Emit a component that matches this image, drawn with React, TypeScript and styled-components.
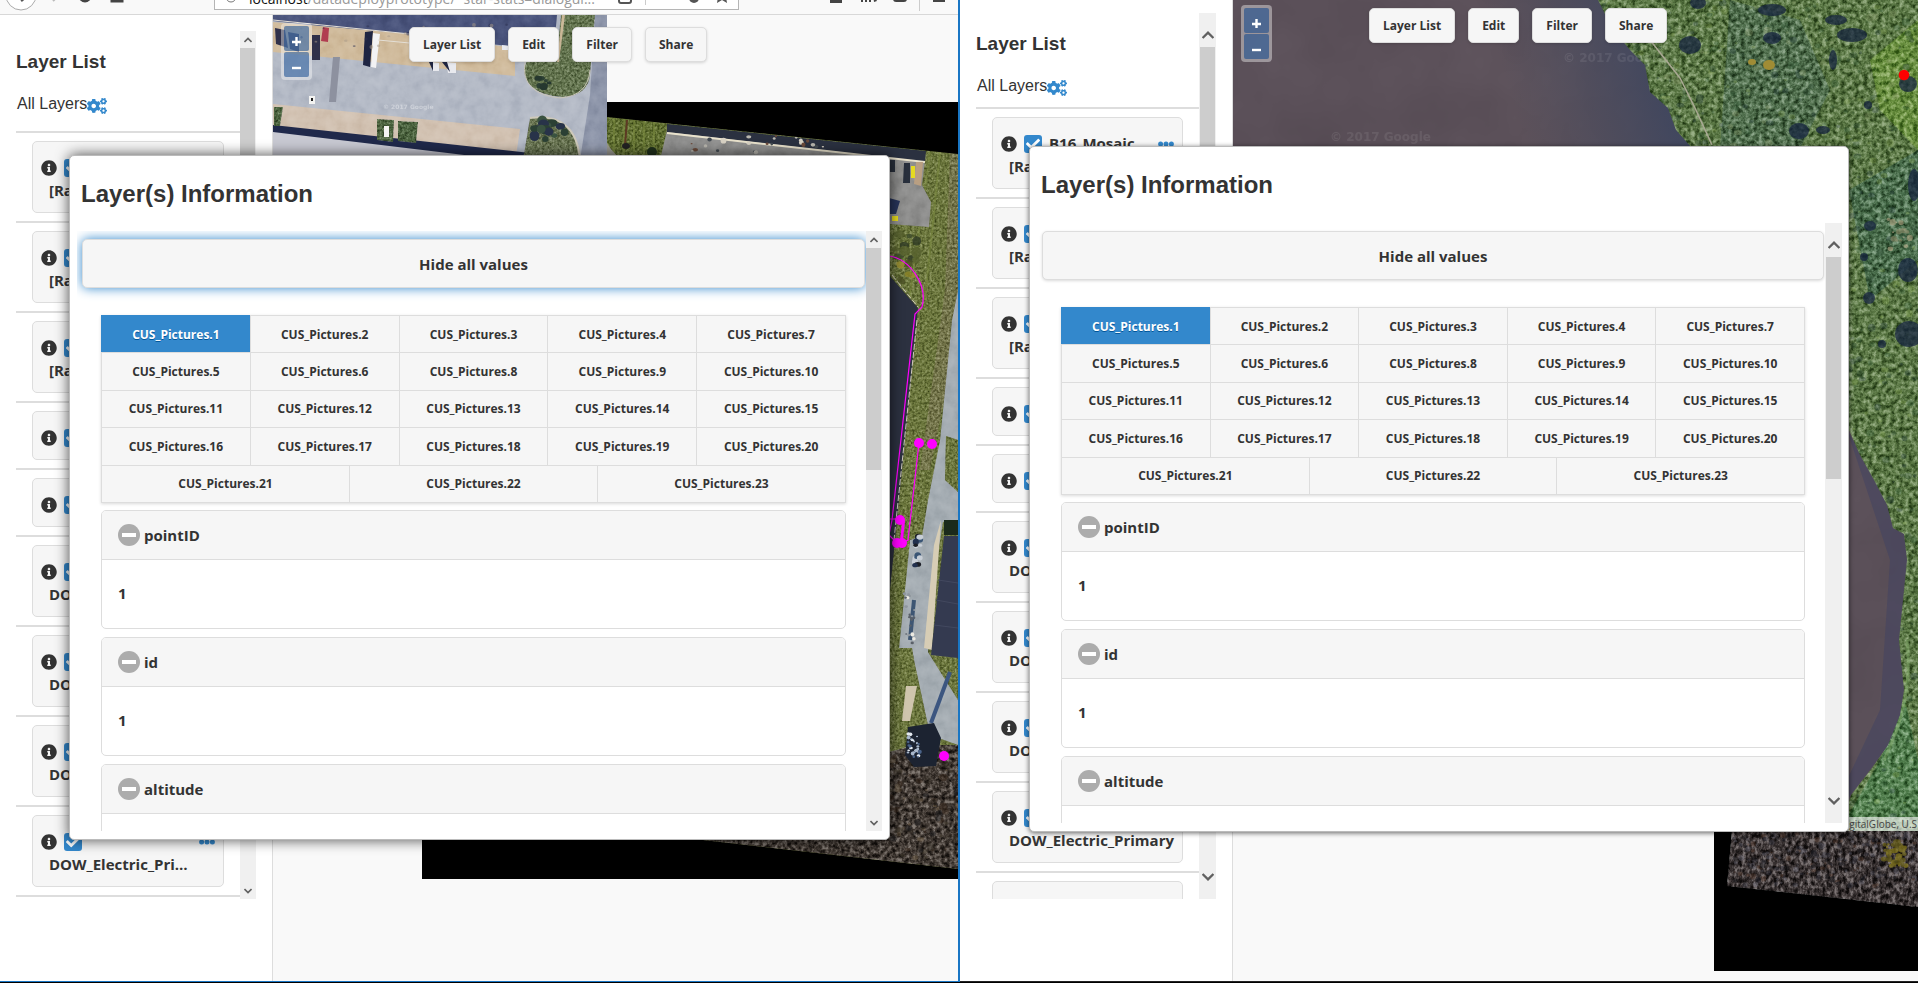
import React from "react";
import styled, { createGlobalStyle, css } from "styled-components";
import { FaCheck, FaCogs, FaInfoCircle } from "react-icons/fa";

const ui = `"Open Sans", "Noto Sans", sans-serif`;
const arial = `"Liberation Sans", Arial, sans-serif`;

const Global = createGlobalStyle`
  * { box-sizing: border-box; }
  body { margin: 0; background: #000; color: #333; font-family: ${ui}; }
  h1, h2, h3, p, ul { margin: 0; padding: 0; }
  button { font-family: inherit; color: inherit; cursor: pointer; margin: 0; }
`;

/* ---------- page and windows ---------- */

const Desktop = styled.div`
  display: grid;
  grid-template-columns: calc(50% + 1px) minmax(0, 1fr);
  height: 100vh;
  padding-bottom: 1px;
  overflow: hidden;
`;

const Window = styled.section<{ $active?: boolean }>`
  display: flex;
  flex-direction: column;
  min-width: 0;
  min-height: 0;
  background: #fff;
  border-bottom: 1px solid #222;
  ${(p) =>
    p.$active &&
    css`
      border-right: 2px solid #1976c4;
      border-bottom-color: #1976c4;
    `}
`;

const Workspace = styled.div`
  position: relative;
  display: flex;
  flex: 1;
  min-height: 0;
`;

/* ---------- browser toolbar ---------- */

const Chrome = styled.header`
  display: flex;
  align-items: flex-end;
  height: 15px;
  flex: none;
  padding-left: 6px;
  overflow: hidden;
  background: #f9f9f9;
  border-bottom: 1px solid #d8d8d8;
`;

const NavIcons = styled.svg`
  flex: none;
  width: 208px;
  height: 14px;
`;

const Address = styled.div`
  display: flex;
  align-items: center;
  width: 525px;
  height: 24px;
  flex: none;
  margin-bottom: 4px;
  padding-left: 10px;
  border: 1px solid #b5b5b5;
  background: #fff;
  font-size: 14px;
  color: #999;
  white-space: nowrap;

  b {
    font-weight: 400;
    color: #111;
  }
  svg {
    flex: none;
  }
`;

const Url = styled.span`
  flex: 1;
  padding-left: 10px;
`;

/* ---------- scroll areas ---------- */

const ScrollArea = styled.div`
  display: flex;
  min-height: 0;
  flex: 1;
  overflow: hidden;
`;

const ScrollContent = styled.div`
  flex: 1;
  min-width: 0;
  overflow: hidden;
`;

const Track = styled.div<{ $wide?: boolean }>`
  display: flex;
  flex-direction: column;
  flex: none;
  width: ${(p) => (p.$wide ? 17 : 16)}px;
  padding: 0 1px 0 ${(p) => (p.$wide ? 1 : 0)}px;
  background: #f0f0f0;
`;

const Arrow = styled.span<{ $wide?: boolean }>`
  display: grid;
  place-items: center;
  height: ${(p) => (p.$wide ? 34 : 17)}px;
  padding-top: ${(p) => (p.$wide ? 10 : 0)}px;
  &:last-child {
    margin-top: auto;
    padding: 0 0 ${(p) => (p.$wide ? 10 : 0)}px;
  }
`;

const Thumb = styled.span<{ $share: number }>`
  height: ${(p) => p.$share}%;
  background: #cdcdcd;
`;

function Scrollbar({ wide, share }: { wide?: boolean; share: number }) {
  const w = wide ? 12 : 8;
  const stroke = { fill: "none", stroke: "#606060", strokeWidth: wide ? 1.9 : 2.2 };
  return (
    <Track $wide={wide} aria-hidden="true">
      <Arrow $wide={wide}>
        <svg width={w} height={w} viewBox="0 0 10 10">
          <path d="M0.5 7.5 5 3l4.500 4.500" {...stroke} />
        </svg>
      </Arrow>
      <Thumb $share={share} />
      <Arrow $wide={wide}>
        <svg width={w} height={w} viewBox="0 0 10 10">
          <path d="M0.5 2.500 5 7l4.500-4.500" {...stroke} />
        </svg>
      </Arrow>
    </Track>
  );
}

/* ---------- layer sidebar ---------- */

const Sidebar = styled.aside<{ $top: number }>`
  display: flex;
  flex: none;
  width: 273px;
  padding: ${(p) => p.$top}px 16px 82px;
  border-right: 1px solid #ddd;
  background: #fff;
`;

const SideTitle = styled.h2`
  padding-top: 19px;
  font: bold 19px/24px ${arial};
`;

const AllLayers = styled.div<{ $gap: number }>`
  display: flex;
  align-items: flex-end;
  height: 22px;
  margin: 20px 0 ${(p) => p.$gap}px;
  padding-left: 1px;
  font: 16px/20px ${arial};
  span {
    align-self: flex-start;
  }
`;

const IconButton = styled.button`
  display: flex;
  padding: 0;
  border: 0;
  background: none;
  color: #38c;
`;

const LayerList = styled.ul`
  list-style: none;
`;

const LayerItem = styled.li`
  padding: 8px 16px;
  border-top: 2px solid #ddd;
`;

const LayerCard = styled.div`
  padding: 17px 8px 12px;
  border: 1px solid #ddd;
  border-radius: 5px;
  background: #f6f6f6;
  font-size: 15px;
  font-weight: 700;
`;

const LayerRow = styled.div`
  display: flex;
  align-items: center;
  gap: 7px;
  height: 18px;
`;

const Tick = styled.label`
  position: relative;
  display: flex;
  width: 18px;
  height: 18px;

  input {
    appearance: none;
    width: 18px;
    height: 18px;
    margin: 0;
    border-radius: 3px;
    background: #38c;
  }
  svg {
    position: absolute;
    top: 2px;
    left: 2px;
    color: #fff;
    pointer-events: none;
  }
`;

const LayerName = styled.span`
  flex: 1;
  padding-bottom: 2px;
  line-height: 18px;
  white-space: nowrap;
`;

const LayerNote = styled.p<{ $clip?: boolean }>`
  margin: 3px 0 0 8px;
  line-height: 20px;
  white-space: nowrap;
  ${(p) =>
    p.$clip &&
    css`
      margin-right: 18px;
      overflow: hidden;
      text-overflow: ellipsis;
    `}
`;

const layers: { name?: string; note?: string }[] = [
  { name: "B16_Mosaic", note: "[Raster]" },
  { note: "[Raster]" },
  { note: "[Raster]" },
  {},
  {},
  { note: "DOW" },
  { note: "DOW" },
  { note: "DOW" },
  { note: "DOW_Electric_Primary" },
  {},
];

function Layers({ top, gap, wide, clip }: { top: number; gap: number; wide?: boolean; clip?: boolean }) {
  return (
    <Sidebar $top={top}>
      <ScrollArea>
        <ScrollContent>
          <SideTitle>Layer List</SideTitle>
          <AllLayers $gap={gap}>
            <span>All Layers</span>
            <IconButton aria-label="Layer settings">
              <FaCogs size={20} />
            </IconButton>
          </AllLayers>
          <LayerList>
            {layers.map((layer, i) => (
              <LayerItem key={i}>
                <LayerCard>
                  <LayerRow>
                    <FaInfoCircle size={16} />
                    <Tick>
                      <input type="checkbox" defaultChecked aria-label={`Show layer ${i + 1}`} />
                      <FaCheck size={14} />
                    </Tick>
                    <LayerName>{layer.name}</LayerName>
                    <IconButton aria-label="More">
                      <svg width="16" height="6" fill="currentColor">
                        <circle cx="2.600" cy="3" r="2.500" />
                        <circle cx="8" cy="3" r="2.500" />
                        <circle cx="13.400" cy="3" r="2.500" />
                      </svg>
                    </IconButton>
                  </LayerRow>
                  {layer.note && <LayerNote $clip={clip}>{layer.note}</LayerNote>}
                </LayerCard>
              </LayerItem>
            ))}
          </LayerList>
        </ScrollContent>
        <Scrollbar wide={wide} share={60} />
      </ScrollArea>
    </Sidebar>
  );
}

/* ---------- map controls ---------- */

const MapPane = styled.main`
  position: relative;
  flex: 1;
  min-width: 0;
  overflow: hidden;
  background: #f9f9f9;
`;

const Imagery = styled.svg`
  position: absolute;
  inset: 0;
  width: 100%;
  height: 100%;
`;

const ZoomBox = styled.div<{ $top: number }>`
  position: absolute;
  top: ${(p) => p.$top}px;
  left: 8px;
  display: grid;
  gap: 1px;
  padding: 3px;
  border-radius: 4px;
  background: rgba(255, 255, 255, 0.4);
`;

const ZoomButton = styled.button`
  display: grid;
  place-items: center;
  width: 25px;
  height: 25px;
  padding: 5px 0 0;
  border: 0;
  border-radius: 2px;
  background: rgba(0, 60, 136, 0.5);
`;

const MapMenu = styled.nav<{ $top: number }>`
  position: absolute;
  top: ${(p) => p.$top}px;
  left: 136px;
  display: flex;
  gap: 13px;
`;

const MenuButton = styled.button`
  height: 35px;
  padding: 0 13px;
  border: 1px solid #ddd;
  border-radius: 5px;
  background: #f6f6f6;
  box-shadow: 0 1px 3px rgba(0, 0, 0, 0.15);
  font-size: 12px;
  font-weight: 700;
`;

function Controls({ top, zoomTop }: { top: number; zoomTop: number }) {
  return (
    <>
      <ZoomBox $top={zoomTop}>
        <ZoomButton aria-label="Zoom in">
          <svg width="9" height="9" stroke="#fff" strokeWidth="2.400">
            <path d="M0 5H9M4.500 0V9" />
          </svg>
        </ZoomButton>
        <ZoomButton aria-label="Zoom out">
          <svg width="9" height="9" stroke="#fff" strokeWidth="2.400">
            <path d="M0 5H9" />
          </svg>
        </ZoomButton>
      </ZoomBox>
      <MapMenu $top={top}>
        {["Layer List", "Edit", "Filter", "Share"].map((t) => (
          <MenuButton key={t}>{t}</MenuButton>
        ))}
      </MapMenu>
    </>
  );
}

/* ---------- information dialog ---------- */

const Dialog = styled.section<{ $top: number; $bottom: number; $deep?: boolean }>`
  position: absolute;
  top: ${(p) => p.$top}px;
  bottom: ${(p) => p.$bottom}px;
  left: 69px;
  right: ${(p) => (p.$deep ? 68 : 69)}px;
  display: flex;
  flex-direction: column;
  padding: 0 ${(p) => (p.$deep ? 7 : 6)}px 8px 7px;
  border: 1px solid #bbb;
  border-radius: 5px;
  background: #fff;
  box-shadow: ${(p) => (p.$deep ? "0 0 14px rgba(0, 0, 0, 0.7)" : "0 1px 5px rgba(0, 0, 0, 0.6)")};
`;

const DialogTitle = styled.h1<{ $height: number }>`
  flex: none;
  height: ${(p) => p.$height}px;
  padding: 24px 0 0 4px;
  font: bold 24px/28px ${arial};
`;

const ToggleAll = styled.button<{ $focused?: boolean }>`
  display: block;
  width: calc(100% - 6px);
  height: 49px;
  margin: 8px 1px 27px 5px;
  border: 1px solid #ddd;
  border-radius: 5px;
  background: #f6f6f6;
  box-shadow: ${(p) => (p.$focused ? "0 0 12px #38c" : "0 1px 3px rgba(0, 0, 0, 0.15)")};
  font-size: 15px;
  font-weight: 700;
`;

const Body = styled.div`
  margin: 0 20px 0 24px;
`;

const Tabs = styled.div`
  display: grid;
  grid-template-rows: repeat(5, 1fr);
  height: 188px;
  margin-bottom: 7px;
  border: solid #ddd;
  border-width: 0 1px 1px 0;
  box-shadow: 0 1px 3px rgba(0, 0, 0, 0.15);
`;

const TabRow = styled.div`
  display: flex;
`;

const Tab = styled.button<{ $on?: boolean }>`
  flex: 1 1 0;
  padding: 0;
  border: solid #ddd;
  border-width: 1px 0 0 1px;
  background: #f6f6f6;
  font-size: 12px;
  font-weight: 700;
  ${(p) =>
    p.$on &&
    css`
      border-color: #38c;
      background: #38c;
      color: #fff;
      text-shadow: 0 1px 0 #059;
    `}
`;

const Panel = styled.section`
  height: 119px;
  margin-bottom: 8px;
  border: 1px solid #ddd;
  border-radius: 5px;
  overflow: hidden;
  font-size: 15px;
  font-weight: 700;
`;

const PanelHead = styled.button`
  display: flex;
  align-items: center;
  gap: 4px;
  width: 100%;
  height: 49px;
  padding: 0 16px;
  border: 0;
  border-bottom: 1px solid #ddd;
  background: #f6f6f6;
  font-size: 15px;
  font-weight: 700;
`;

const PanelValue = styled.p`
  padding: 23px 16px;
  line-height: 20px;
`;

const tabRows = [
  [1, 2, 3, 4, 7],
  [5, 6, 8, 9, 10],
  [11, 12, 13, 14, 15],
  [16, 17, 18, 19, 20],
  [21, 22, 23],
];

const fields = [
  ["pointID", "1"],
  ["id", "1"],
  ["altitude", ""],
];

function Information(props: { top: number; bottom: number; deep?: boolean; wide?: boolean }) {
  const { top, bottom, deep, wide } = props;
  return (
    <Dialog role="dialog" aria-label="Layer(s) Information" $top={top} $bottom={bottom} $deep={deep}>
      <DialogTitle $height={wide ? 76 : 75}>Layer(s) Information</DialogTitle>
      <ScrollArea>
        <ScrollContent>
          <ToggleAll $focused={deep}>Hide all values</ToggleAll>
          <Body>
            <Tabs role="tablist">
              {tabRows.map((row) => (
                <TabRow key={row[0]} role="presentation">
                  {row.map((n) => (
                    <Tab key={n} role="tab" aria-selected={n === 1} $on={n === 1}>
                      CUS_Pictures.{n}
                    </Tab>
                  ))}
                </TabRow>
              ))}
            </Tabs>
            {fields.map(([name, value]) => (
              <Panel key={name}>
                <PanelHead aria-expanded="true">
                  <svg width="22" height="22">
                    <circle cx="11" cy="11" r="11" fill="#acacac" />
                    <rect x="4" y="9" width="14" height="4" fill="#fff" />
                  </svg>
                  {name}
                </PanelHead>
                <PanelValue>{value}</PanelValue>
              </Panel>
            ))}
          </Body>
        </ScrollContent>
        <Scrollbar wide={wide} share={37} />
      </ScrollArea>
    </Dialog>
  );
}

/* ---------- aerial imagery ---------- */

function rng(seed: number) {
  let s = seed;
  return () => {
    s = (s * 16807) % 2147483647;
    return s / 2147483647;
  };
}

type ScatterProps = {
  seed: number;
  n: number;
  box: [number, number, number, number];
  r: [number, number];
  colors: string[];
  opacity?: number;
};

/* Irregular blobs strewn over a box: tree crowns, shrubs and shadows. */
function Scatter({ seed, n, box, r, colors, opacity = 1 }: ScatterProps) {
  const rand = rng(seed);
  const [x, y, w, h] = box;
  return (
    <g opacity={opacity}>
      {Array.from({ length: n }, (_, i) => {
        const rx = r[0] + rand() * (r[1] - r[0]);
        return (
          <ellipse
            key={i}
            cx={x + rand() * w}
            cy={y + rand() * h}
            rx={rx}
            ry={rx * (0.6 + rand() * 0.5)}
            fill={colors[Math.floor(rand() * colors.length)]}
          />
        );
      })}
    </g>
  );
}

function Grain({ id, freq, contrast }: { id: string; freq: string; contrast: number }) {
  const off = 0.5 - contrast / 2;
  const row = `${contrast} 0 0 0 ${off} `;
  return (
    <filter id={id} x="0" y="0" width="100%" height="100%" colorInterpolationFilters="sRGB">
      <feTurbulence type="fractalNoise" baseFrequency={freq} numOctaves="4" seed="4" />
      <feColorMatrix values={row + row + row + "0 0 0 0 1"} result="noise" />
      <feBlend in="noise" in2="SourceGraphic" mode="soft-light" />
      <feComposite in2="SourceGraphic" operator="in" />
    </filter>
  );
}

function LotImagery() {
  return (
    <Imagery viewBox="273 15 685 966" preserveAspectRatio="xMinYMin slice" aria-hidden="true">
      <defs>
        <Grain id="l-grass" freq="0.4" contrast={1.1} />
        <Grain id="l-wood" freq="0.24" contrast={1.9} />
        <Grain id="l-road" freq="0.09" contrast={0.3} />
        <clipPath id="l-google">
          <path d="M273 15H607V200H273z" />
        </clipPath>
        <clipPath id="l-ortho">
          <path d="M607 117 958 154V869L703 840 600 828V117z" />
        </clipPath>
      </defs>
      <path d="M607 102H958V879H422V700H607z" fill="#000" />
      <g clipPath="url(#l-ortho)">
        <g filter="url(#l-grass)">
          <path d="M600 110H958V869H600z" fill="#6b763c" />
          <path d="M950 150 958 150 958 330 930 470 920 470 945 290z" fill="#74754a" />
          <path d="M607 117 667 124 662 160H607z" fill="#5f6e2f" />
        </g>
        <g stroke="#7c8b40" strokeWidth="2" opacity=".5">
          <path d="M614 118V160M624 119V160M634 120V160M644 121V160M654 122V160M930 152 905 330M940 152 925 300" />
        </g>
        <path d="M627 120 625 145" stroke="#5d3a24" strokeWidth="2" />
        <path d="M607 143Q612 152 620 158H607z" fill="#9b9a92" />
        <ellipse cx="626" cy="146" rx="4" ry="3" fill="#222" />
        <ellipse cx="652" cy="152" rx="5" ry="5" fill="#20301c" />
        <g filter="url(#l-road)">
          <path d="M667 130 925 161 922 185 931 202 929 227 889 224 880 160H660z" fill="#8f8f8e" />
        </g>
        <path d="M667 124 926 151 925 162 667 132z" fill="#2b3140" />
        <path d="M667 133 925 162" stroke="#e9e2cc" strokeWidth="2" />
        <Scatter seed={31} n={24} box={[680, 136, 150, 18]} r={[1, 3]} colors={["#d8d2c4", "#444b52", "#6b4a3a", "#b8b6ae"]} />
        <path d="M923 162 921 186 914 184 916 162z" fill="#b99f82" />
        <path d="M889 160H895V172H889zM904 163H910V183H903z" fill="#282f3c" />
        <path d="M911 166H915V178H911zM892 216H898V221H892z" fill="#e6db20" />
        <path d="M889 198 900 201 896 214H889z" fill="#27345a" />
        <Scatter seed={11} n={14} box={[888, 232, 30, 28]} r={[2, 6]} colors={["#2f3a25", "#3c4a2a", "#55602d"]} opacity={0.8} />
        <Scatter seed={12} n={10} box={[898, 262, 18, 20]} r={[2, 4]} colors={["#8b8326", "#4a4f24", "#a09232"]} opacity={0.8} />
        <path d="M889 275 918 308 896 530 889 600z" fill="#2c3140" />
        <path d="M892 275 918 307M917 320 894 540" fill="none" stroke="#cfc9bd" strokeDasharray="6 2" />
        <g filter="url(#l-road)">
          <path d="M952 320 958 290V440L946 436 945 480 958 492V520L943 522 937 560 928 652 958 700V745L930 735 914 660 912 648 899 648 910 540 922 536 928 500 940 440z" fill="#a5adb3" />
        </g>
        <path d="M941 520 932 650 924 648 934 545z" fill="#d7cdb5" />
        <path d="M944 536H958V658L931 655z" fill="#343a50" />
        <path d="M944 520H958V535H944z" fill="#1b2a1b" />
        <path d="M936 600 958 604M938 580 958 583M934 625 958 628" stroke="#43495f" />
        <Scatter seed={7} n={14} box={[912, 535, 9, 36]} r={[2, 4]} colors={["#22304e", "#1b1e26", "#c8ced6", "#3a5575"]} />
        <path d="M914 600 910 640" stroke="#3e5673" strokeWidth="4" />
        <Scatter seed={9} n={18} box={[904, 590, 12, 55]} r={[1, 2]} colors={["#ece9e1", "#8f969d", "#5a6068"]} />
        <path d="M906 686H917L910 721H902z" fill="#cfc5ad" />
        <path d="M950 672 931 723" stroke="#3c5680" strokeWidth="4" />
        <g filter="url(#l-wood)">
          <path d="M600 745 889 752 915 745 958 745V880H600z" fill="#423a34" />
        </g>
        <Scatter seed={8} n={110} box={[890, 752, 68, 108]} r={[1, 4]} colors={["#1d1c1e", "#2d261f", "#4a4235", "#6b5a44", "#3c2c20"]} opacity={0.5} />
        <path d="M908 727 934 723 941 738 936 766 914 767 905 755z" fill="#1c2331" />
        <Scatter seed={19} n={30} box={[908, 733, 12, 24]} r={[1, 2]} colors={["#a9b8cc", "#e4eaf0", "#4a6288"]} />
        <g fill="none" stroke="#f0f" strokeWidth="1.200">
          <path d="M889 256C910 259 928 285 922 307L915 314 892 520 889 535 894 540M919 443 908 540 896 546M889 519H900" />
        </g>
        <g fill="#f0f">
          <circle cx="919" cy="443" r="5" />
          <circle cx="932" cy="444" r="5" />
          <circle cx="900" cy="520" r="5" />
          <circle cx="897" cy="543" r="5" />
          <circle cx="902" cy="543" r="5" />
          <circle cx="944" cy="756" r="5" />
          <path d="M902 522 905 521 903 540 900 540z" />
        </g>
      </g>
      <g clipPath="url(#l-google)">
        <g filter="url(#l-road)">
          <path d="M273 15H607V200H273z" fill="#b4bac6" />
          <path d="M273 15H557L553 60 509 46 273 21z" fill="#4a547c" />
          <path d="M273 22 400 33 515 48 515 76 273 52z" fill="#d0bb9c" />
          <path d="M273 104 520 129 516 156 480 150 273 127z" fill="#d2c2b2" />
          <path d="M595 15H607V160H580L590 95z" fill="#8e96aa" />
        </g>
        <path d="M273 126 524 156 273 190z" fill="#c8c9d2" />
        <path d="M273 125 530 153V163L273 132z" fill="#20294b" />
        <g filter="url(#l-grass)">
          <path d="M561 15H595L590 75Q588 96 562 97 524 94 524 68L528 58 556 62z" fill="#63744e" />
          <path d="M530 118Q575 110 581 160H523z" fill="#697552" />
          <path d="M377 119 394 120 393 142 377 140zM398 121 418 122 416 143 398 141zM274 107H283L280 126H274z" fill="#4b633e" />
        </g>
        <path d="M562 15H565L559 62H557z" fill="#cbb898" />
        <path d="M525 62Q520 94 560 98 588 96 590 70" fill="none" stroke="#c9c5b8" />
        <path d="M530 118Q576 112 580 160" fill="none" stroke="#cfcabb" strokeWidth="2" />
        <Scatter seed={3} n={7} box={[538, 78, 20, 10]} r={[2, 5]} colors={["#26382f", "#2d4034"]} />
        <Scatter seed={5} n={14} box={[528, 120, 40, 20]} r={[3, 6]} colors={["#2b4034", "#3a5240", "#283349"]} />
        <path d="M365 32 373 31 370 67 363 65z" fill="#1f2542" />
        <path d="M373 33 380 34 376 68 371 67z" fill="#f2f2f4" />
        <path d="M431 62 439 63V71H433zM446 62 456 63V73H448zM502 45 510 46V50H502z" fill="#e8e9ee" />
        <path d="M429 62H433V71zM442 62H447L450 72z" fill="#1f2542" />
        <path d="M275 28 285 30 288 48 276 44zM288 32 299 34V52L290 49zM312 35H320V60H312z" fill="#30314a" />
        <path d="M323 27 329 28 328 42 321 41z" fill="#b13d50" />
        <path d="M333 57H340L336 102H329z" fill="#8d919f" />
        <path d="M309 96H315V104H309zM384 126H389V137H384z" fill="#f4f4f2" />
        <path d="M311 98H313V101H311z" fill="#222" />
        <path d="M273 20 410 34M378 40 420 44" stroke="#e4dfd6" />
        <Scatter seed={21} n={40} box={[300, 24, 250, 26]} r={[1, 2]} colors={["#2c3050", "#a99a88"]} opacity={0.5} />
        <text x="383" y="109" fontSize="6" fill="#fff" opacity=".35" fontFamily="DejaVu Sans" fontWeight="bold">
          © 2017 Google
        </text>
      </g>
    </Imagery>
  );
}

function RiverImagery() {
  return (
    <Imagery viewBox="1233 0 685 981" preserveAspectRatio="xMinYMin slice" aria-hidden="true">
      <defs>
        <Grain id="r-veg" freq="0.22" contrast={1.7} />
        <Grain id="r-water" freq="0.01" contrast={0.12} />
        <Grain id="r-wood" freq="0.26 0.18" contrast={2.2} />
        <linearGradient id="r-shore" x1="1400" x2="1690" y1="150" y2="60" gradientUnits="userSpaceOnUse">
          <stop offset=".4" stopColor="#444a5e" stopOpacity="0" />
          <stop offset="1" stopColor="#3a4460" />
        </linearGradient>
        <clipPath id="r-land">
          <path d="M1598 0 1612 28 1630 50 1645 65 1650 92 1668 108 1676 130 1692 148 1760 300 1849 430 1860 455 1874 480 1887 505 1893 528 1904 534 1907 560 1903 600 1899 640 1904 690 1900 715 1888 745 1872 768 1851 795 1840 832H1918V0z" />
        </clipPath>
      </defs>
      <g filter="url(#r-water)">
        <path d="M1233 0H1918V831H1233z" fill="#5b5059" />
      </g>
      <path d="M1400 0H1720V200H1400z" fill="url(#r-shore)" />
      <path d="M1847 430 1908 530V720L1847 800V780L1880 710 1890 560z" fill="#454461" opacity=".6" />
      <g clipPath="url(#r-land)">
        <g filter="url(#r-veg)">
          <path d="M1590 0H1918V832H1590z" fill="#5b7845" />
          <path d="M1730 0 1800 20 1830 90 1800 148H1720z" fill="#4f6e4c" />
          <path d="M1849 190 1918 150V260L1870 300z" fill="#4a6e4c" />
          <path d="M1870 60 1918 20V150L1880 110z" fill="#688e3e" />
          <path d="M1840 830 1880 760 1905 700 1918 760V832z" fill="#527f4e" />
        </g>
        <Scatter seed={42} n={300} box={[1600, 0, 318, 148]} r={[1, 4]} colors={["#2c4a35", "#7d9a4a", "#39603f", "#8a9a6a", "#243a3d"]} opacity={0.3} />
        <Scatter seed={43} n={260} box={[1847, 148, 71, 680]} r={[1, 4]} colors={["#2c4a35", "#8fae58", "#39603f", "#243a3d"]} opacity={0.3} />
        <g fill="#172540" opacity=".75">
          <ellipse cx="1690" cy="45" rx="11" ry="9" />
          <ellipse cx="1698" cy="3" rx="8" ry="6" />
          <ellipse cx="1772" cy="10" rx="14" ry="6" />
          <ellipse cx="1772" cy="38" rx="9" ry="6" />
          <ellipse cx="1836" cy="20" rx="11" ry="5" />
          <ellipse cx="1852" cy="35" rx="15" ry="7" />
          <ellipse cx="1833" cy="60" rx="4" ry="10" />
          <ellipse cx="1799" cy="131" rx="10" ry="8" />
          <ellipse cx="1823" cy="130" rx="7" ry="4" />
          <ellipse cx="1868" cy="105" rx="4" ry="4" />
          <ellipse cx="1908" cy="84" rx="9" ry="8" />
          <ellipse cx="1914" cy="185" rx="6" ry="16" />
          <ellipse cx="1870" cy="226" rx="6" ry="5" />
          <ellipse cx="1864" cy="257" rx="4" ry="4" />
          <ellipse cx="1869" cy="298" rx="6" ry="6" />
          <ellipse cx="1908" cy="270" rx="10" ry="12" />
          <ellipse cx="1909" cy="334" rx="14" ry="13" />
          <ellipse cx="1882" cy="344" rx="4" ry="4" />
        </g>
        <path d="M1650 40 1680 78 1695 108 1712 145" fill="none" stroke="#a9a893" strokeWidth="1.500" />
        <ellipse cx="1769" cy="65" rx="6" ry="5" fill="#a08c35" />
        <ellipse cx="1752" cy="62" rx="4" ry="3" fill="#a08c35" />
        <Scatter seed={51} n={16} box={[1888, 218, 22, 36]} r={[1, 4]} colors={["#b3a685", "#8d8a68"]} opacity={0.6} />
        <path d="M1907 640Q1914 700 1884 760" fill="none" stroke="#88b070" strokeWidth="3" opacity=".5" />
      </g>
      <g fill="#fff" opacity=".08" fontFamily="DejaVu Sans" fontWeight="bold" fontSize="12">
        <text x="1330" y="141">© 2017 Google</text>
        <text x="1563" y="62">© 2017 Google</text>
      </g>
      <path d="M1714 831H1918V971H1714z" fill="#000" />
      <g filter="url(#r-wood)">
        <path d="M1732 831H1918V907L1727 886z" fill="#3b3434" />
      </g>
      <Scatter seed={78} n={260} box={[1734, 834, 182, 52]} r={[1, 3]} colors={["#15161b", "#5a3e30", "#6a6a78", "#2a2c38"]} opacity={0.4} />
      <Scatter seed={77} n={40} box={[1884, 842, 22, 24]} r={[1, 4]} colors={["#8a7d1c", "#6b6218"]} opacity={0.7} />
      <circle cx="1904" cy="75" r="5.300" fill="#f00" />
    </Imagery>
  );
}

const Attribution = styled.small`
  position: absolute;
  bottom: 150px;
  right: 0;
  padding: 0 1px;
  background: rgba(245, 245, 245, 0.65);
  font: 10px/14px ${ui};
  color: #444;
  white-space: nowrap;
`;

/* ---------- app ---------- */

function BrowserBar() {
  return (
    <Chrome>
      <NavIcons aria-hidden="true">
        <circle cx="15" cy="-5" r="15" fill="#fff" stroke="#aaa" />
        <path d="M14 -3 17 1" stroke="#555" strokeWidth="3" />
        <path d="M47 1 50 -2" stroke="#bbb" strokeWidth="2" />
        <circle cx="79" cy="-4" r="5" fill="none" stroke="#444" strokeWidth="3" />
        <path d="M106 -5V1H116V-5M111 -3V1" fill="none" stroke="#444" strokeWidth="3" />
      </NavIcons>
      <Address>
        <svg width="14" height="14" fill="none" stroke="#777">
          <circle cx="6" cy="6" r="5" />
        </svg>
        <Url>
          <b>localhost</b>/datadeployprototype/~star-stats=dialogui...
        </Url>
        <svg width="122" height="14" fill="#555">
          <rect x="3" y="1" width="12" height="11" rx="2" fill="none" stroke="#555" strokeWidth="2" />
          <path d="M29 0H30V14H29z" fill="#ccc" />
          <circle cx="78" cy="7" r="5" />
          <path d="M106 0 110 6 111 12 106 9 101 12 102 6z" />
        </svg>
      </Address>
      <svg width="218" height="14" fill="#444" aria-hidden="true">
        <path d="M91 0H103V3H91zM122 -6H124V2H122zM126 -6H128V2H126zM130 -6H132V2H130zM134 -6 138 1 135 2z" />
        <rect x="154" y="-8" width="14" height="10" rx="3" />
        <path d="M180 -5H181V11H180z" fill="#ccc" />
        <path d="M194 0H206V2H194z" />
      </svg>
    </Chrome>
  );
}

export default function App() {
  return (
    <>
      <Global />
      <Desktop>
        <Window $active>
          <BrowserBar />
          <Workspace>
            <Layers top={16} gap={15} clip />
            <MapPane>
              <LotImagery />
              <Controls top={12} zoomTop={8} />
            </MapPane>
            <Information top={140} bottom={141} deep />
          </Workspace>
        </Window>
        <Window>
          <Workspace>
            <Layers top={13} gap={9} wide />
            <MapPane>
              <RiverImagery />
              <Attribution>© DigitalGlobe, U.S</Attribution>
              <Controls top={8} zoomTop={5} />
            </MapPane>
            <Information top={146} bottom={149} wide />
          </Workspace>
        </Window>
      </Desktop>
    </>
  );
}
